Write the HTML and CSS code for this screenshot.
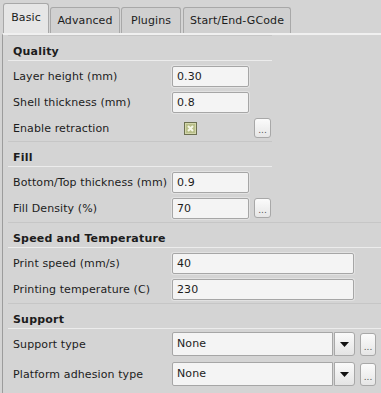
FILE: index.html
```html
<!doctype html>
<html>
<head>
<meta charset="utf-8">
<title>Basic settings</title>
<link rel="stylesheet" href="styles.css">
</head>

<body>
<div class="notebook">
    <div class="tabs">
        <div class="tab active tab-basic">Basic</div>
        <div class="tab tab-advanced">Advanced</div>
        <div class="tab tab-plugins">Plugins</div>
        <div class="tab tab-gcode">Start/End-GCode</div>
    </div>
    <div class="page">
        <div class="section narrow">
            <div class="section-title">Quality</div>
            <div class="row">
                <span class="label">Layer height (mm)</span>
                <span class="field short">0.30</span>
            </div>
            <div class="row">
                <span class="label">Shell thickness (mm)</span>
                <span class="field short">0.8</span>
            </div>
            <div class="row">
                <span class="label">Enable retraction</span>
                <span class="check-cell">
                    <svg class="check" width="13" height="13" viewBox="0 0 13 13">
                        <rect x="0.5" y="0.5" width="12" height="12" fill="#d3d7ab" stroke="#6c7050"/>
                        <rect x="2" y="2" width="9" height="9" fill="#b9bf8a"/>
                        <path d="M4 4 L9 9 M9 4 L4 9" stroke="#f6f7e6" stroke-width="2"/>
                    </svg>
                </span>
                <span class="more">...</span>
            </div>
        </div>
        <div class="section narrow">
            <div class="section-title">Fill</div>
            <div class="row">
                <span class="label">Bottom/Top thickness (mm)</span>
                <span class="field short">0.9</span>
            </div>
            <div class="row">
                <span class="label">Fill Density (%)</span>
                <span class="field short">70</span>
                <span class="more">...</span>
            </div>
        </div>
        <div class="section speed">
            <div class="section-title">Speed and Temperature</div>
            <div class="row">
                <span class="label">Print speed (mm/s)</span>
                <span class="field long">40</span>
            </div>
            <div class="row">
                <span class="label">Printing temperature (C)</span>
                <span class="field long">230</span>
            </div>
        </div>
        <div class="section support">
            <div class="section-title">Support</div>
            <div class="row combo-row">
                <span class="label">Support type</span>
                <span class="combo">
                    <span class="combo-text">None</span>
                    <span class="combo-btn"><svg width="9" height="5" viewBox="0 0 9 5"><path d="M0 0 H9 L4.5 5 Z" fill="#111"/></svg></span>
                </span>
                <span class="more tall">...</span>
            </div>
            <div class="row combo-row">
                <span class="label">Platform adhesion type</span>
                <span class="combo">
                    <span class="combo-text">None</span>
                    <span class="combo-btn"><svg width="9" height="5" viewBox="0 0 9 5"><path d="M0 0 H9 L4.5 5 Z" fill="#111"/></svg></span>
                </span>
                <span class="more tall">...</span>
            </div>
        </div>
    </div>
</div>
</body>
</html>
```

FILE: styles.css
```css
html, body { height: 100%; }
body { margin: 0; background: #d4d4d4; font-family: "DejaVu Sans", Verdana, sans-serif; font-size: 11px; letter-spacing: 0.1px; color: #1c1c1c; overflow: hidden; }
.notebook { padding: 3px 0 0 2px; height: 100%; box-sizing: border-box; display: flex; flex-direction: column; }
.tabs { display: flex; align-items: flex-end; height: 30px; padding-left: 1px; gap: 1px; flex: none; }
.tab { height: 26px; line-height: 25px; text-align: center; border: 1px solid #a8a8a8; border-bottom: none; border-radius: 3px 3px 0 0; background: #d0d0d0; box-sizing: border-box; }
.tab.active { height: 30px; line-height: 28px; background: #e6e6e6; }
.tab-basic { width: 46px; }
.tab-advanced { width: 70px; }
.tab-plugins { width: 60px; }
.tab-gcode { width: 108px; margin-left: 1px; }
.page { flex: 1; border-left: 1px solid #9c9c9c; border-top: 2px solid #f0f0f0; padding-left: 5px; }
.section.narrow { width: 264px; }
.section.speed { margin-top: 1px; }
.section.support { margin-top: 1px; }
.section-title { height: 26px; box-sizing: border-box; padding: 10px 0 0 5px; line-height: 14px; font-weight: bold; letter-spacing: 0.2px; border-bottom: 1px solid #ececec; box-shadow: 0 1px 0 #c6c6c6 inset; margin-bottom: 2px; }
.row { display: flex; align-items: center; height: 26px; padding-left: 5px; }
.label { width: 159px; flex: none; }
.field { height: 21px; line-height: 20px; box-sizing: border-box; padding-left: 4px; background: #f4f4f4; border: 1px solid #a6a6a6; border-radius: 2px; box-shadow: 0 0 0 1px #e2e2e2; }
.field.short { width: 77px; }
.field.long { width: 182px; }
.check-cell { width: 77px; display: flex; align-items: center; padding-left: 12px; box-sizing: border-box; }
.check { display: block; }
.more { width: 17px; height: 20px; margin-left: 5px; box-sizing: border-box; border: 1px solid #a8a8a8; border-radius: 3px; background: linear-gradient(#fbfbfb, #e6e6e6); color: #555; font-size: 9px; line-height: 22px; text-align: center; letter-spacing: 0; }
.more.tall { width: 16px; height: 23px; line-height: 26px; }
.combo-row + .combo-row { margin-top: 4px; }
.combo { display: flex; height: 24px; }
.combo-text { width: 161px; box-sizing: border-box; padding-left: 4px; line-height: 22px; background: #f4f4f4; border: 1px solid #a6a6a6; border-radius: 2px 0 0 2px; }
.combo-btn { width: 21px; box-sizing: border-box; margin-left: 1px; border: 1px solid #a8a8a8; border-radius: 0 3px 3px 0; background: linear-gradient(#fafafa, #e4e4e4); display: flex; align-items: center; justify-content: center; }
```
